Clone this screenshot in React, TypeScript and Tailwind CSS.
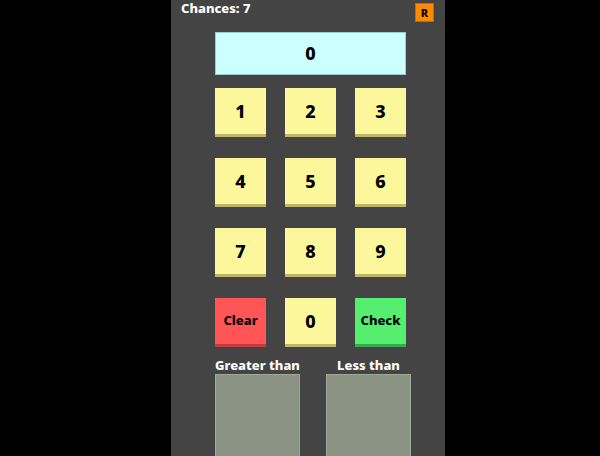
import React from 'react';

const font = { fontFamily: '"Noto Sans", "Liberation Sans", sans-serif' };

const Key = ({ label, tone = 'yellow' }: { label: string; tone?: 'yellow' | 'red' | 'green' }) => {
  const tones = {
    yellow: 'bg-[#fdf79c] border-b-[#bfb66a] text-[18px]',
    red: 'bg-[#ff5555] border-b-[#c23c3c] text-[13px]',
    green: 'bg-[#55ee6f] border-b-[#3aa84c] text-[13px]',
  };
  return (
    <div
      className={`h-[49px] w-[51px] flex items-center justify-center font-extrabold text-black border-b-[3px] ${tones[tone]}`}
    >
      {label}
    </div>
  );
};

export default function App() {
  const keys = ['1', '2', '3', '4', '5', '6', '7', '8', '9'];
  return (
    <div className="w-[600px] h-[456px] bg-black overflow-hidden" style={font}>
      <div className="ml-[171px] w-[274px] h-[456px] bg-[#444444] flex flex-col overflow-hidden">
        <div className="shrink-0 h-[32px] flex items-start justify-between pl-[10px] pr-[11px]">
          <span className="text-white text-[13px] font-extrabold leading-none mt-[2px]">Chances: 7</span>
          <div className="mt-[3px] w-[19px] h-[19px] bg-[#ff8a00] border border-[#c56a00] flex items-center justify-center text-[11px] font-extrabold text-black leading-none">
            R
          </div>
        </div>
        <div className="shrink-0 ml-[44px] w-[191px] h-[43px] bg-[#ccffff] border border-[#9cc] flex items-center justify-center text-[18px] font-extrabold text-black">
          0
        </div>
        <div className="shrink-0 ml-[44px] mt-[13px] w-[191px] grid grid-cols-3 gap-x-[19px] gap-y-[21px]">
          {keys.map((k) => (
            <Key key={k} label={k} />
          ))}
          <Key label="Clear" tone="red" />
          <Key label="0" />
          <Key label="Check" tone="green" />
        </div>
        <div className="shrink-0 ml-[44px] mt-[10px] flex gap-[26px]">
          <div className="w-[85px] flex flex-col items-center">
            <span className="text-white text-[13px] font-extrabold leading-[17px] whitespace-nowrap">Greater than</span>
            <div className="w-[85px] h-[100px] bg-[#8a9384] border border-[#a0a898]" />
          </div>
          <div className="w-[85px] flex flex-col items-center">
            <span className="text-white text-[13px] font-extrabold leading-[17px] whitespace-nowrap">Less than</span>
            <div className="w-[85px] h-[100px] bg-[#8a9384] border border-[#a0a898]" />
          </div>
        </div>
      </div>
    </div>
  );
}
